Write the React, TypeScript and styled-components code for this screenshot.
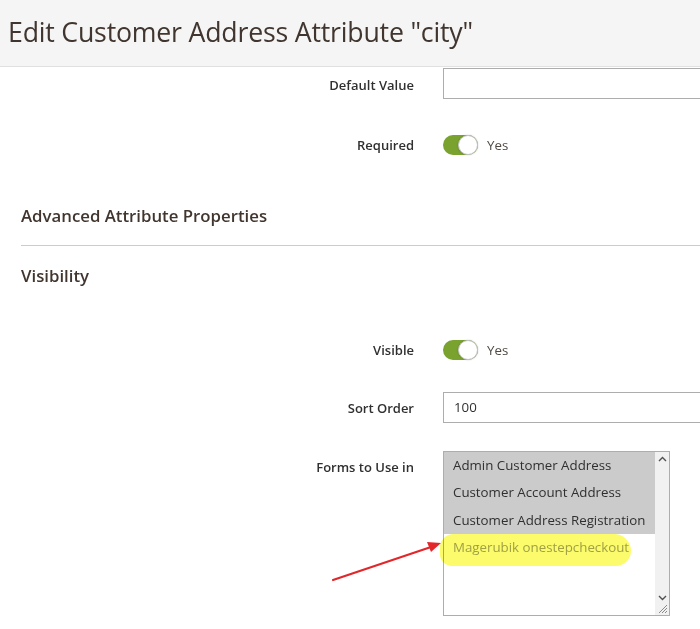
import React from 'react';
import styled, { createGlobalStyle } from 'styled-components';

const GlobalStyle = createGlobalStyle`
  html, body {
    margin: 0;
    padding: 0;
    background: #fff;
    overflow: hidden;
  }
  body {
    font-family: 'Open Sans', 'Liberation Sans', sans-serif;
    color: #303030;
  }
`;

const Page = styled.div`
  position: relative;
  width: 700px;
  height: 629px;
  overflow: hidden;
`;

const Header = styled.header`
  height: 67px;
  background: #f5f5f5;
  border-bottom: 1px solid #e1e1e1;
  display: flex;
  align-items: center;
  padding: 0 0 4px 8px;
  box-sizing: border-box;
`;

const PageTitle = styled.h1`
  margin: 0;
  font-size: 26.7px;
  font-weight: 400;
  color: #41362f;
  letter-spacing: -0.2px;
`;

const Content = styled.div`
  padding-left: 21px;
`;

const FieldRow = styled.div<{ $top: number; $align?: string }>`
  display: grid;
  grid-template-columns: 393px 1fr;
  column-gap: 29px;
  align-items: ${({ $align }) => $align || 'center'};
  margin-top: ${({ $top }) => $top}px;
`;

const Label = styled.label<{ $pad?: number }>`
  text-align: right;
  font-size: 13px;
  font-weight: 600;
  color: #303030;
  padding-top: ${({ $pad }) => $pad || 0}px;
  line-height: 19px;
`;

const TextInput = styled.div`
  width: 320px;
  height: 31px;
  box-sizing: border-box;
  border: 1px solid #adadad;
  font-size: 13.3px;
  line-height: 29px;
  padding-left: 10px;
  color: #303030;
`;

const ToggleWrap = styled.div`
  display: flex;
  align-items: center;
  gap: 9px;
  font-size: 13.3px;
  color: #514943;
`;

const Track = styled.span`
  position: relative;
  width: 35px;
  height: 20px;
  border-radius: 10px;
  background: #79a22e;
`;

const Knob = styled.span`
  position: absolute;
  right: 0;
  top: 0;
  width: 20px;
  height: 20px;
  border-radius: 50%;
  box-sizing: border-box;
  background: #fff;
  border: 1px solid #c4c4c4;
  box-shadow: 0 0 2px rgba(0, 0, 0, 0.2);
`;

const SectionTitle = styled.div<{ $top: number; $divider?: boolean }>`
  margin-top: ${({ $top }) => $top}px;
  font-size: 16.8px;
  font-weight: 600;
  color: #41362f;
  line-height: 24px;
  padding-bottom: ${({ $divider }) => ($divider ? 17 : 0)}px;
  border-bottom: ${({ $divider }) => ($divider ? '1px solid #cccccc' : 'none')};
`;

const MultiSelect = styled.div`
  position: relative;
  width: 227px;
  height: 165px;
  box-sizing: border-box;
  border: 1px solid #adadad;
  display: flex;
`;

const OptionList = styled.div`
  flex: 1;
`;

const Option = styled.div<{ $selected?: boolean; $muted?: boolean }>`
  height: 27.3px;
  line-height: 27px;
  padding-left: 9px;
  font-size: 13.3px;
  white-space: nowrap;
  background: ${({ $selected }) => ($selected ? '#cbcbcb' : 'transparent')};
  color: ${({ $muted }) => ($muted ? '#a3a3a3' : '#303030')};
`;

const ScrollBar = styled.div`
  width: 14px;
  background: #f1f1f1;
  display: flex;
  flex-direction: column;
  justify-content: space-between;
  align-items: center;
  padding: 4px 0 14px;
  box-sizing: border-box;
`;

const Grip = styled.svg`
  position: absolute;
  right: 1px;
  bottom: 1px;
`;

const Highlight = styled.span`
  position: absolute;
  left: -4px;
  top: 82px;
  width: 191px;
  height: 32px;
  border-radius: 16px 20px 18px 14px;
  background: #fbfb5c;
  mix-blend-mode: multiply;
  opacity: 0.9;
`;

const Arrow = styled.svg`
  position: absolute;
  left: 325px;
  top: 530px;
`;

const Chevron: React.FC<{ up?: boolean }> = ({ up }) => (
  <svg width="9" height="6" viewBox="0 0 9 6">
    <path
      d={up ? 'M1 5 L4.5 1.5 L8 5' : 'M1 1 L4.5 4.5 L8 1'}
      fill="none"
      stroke="#505050"
      strokeWidth="1.4"
    />
  </svg>
);

const Toggle: React.FC = () => (
  <ToggleWrap>
    <Track>
      <Knob />
    </Track>
    Yes
  </ToggleWrap>
);

export default function App() {
  return (
    <Page>
      <GlobalStyle />
      <Header>
        <PageTitle>Edit Customer Address Attribute "city"</PageTitle>
      </Header>
      <Content>
        <FieldRow $top={1}>
          <Label $pad={4}>Default Value</Label>
          <TextInput />
        </FieldRow>
        <FieldRow $top={36}>
          <Label $pad={1}>Required</Label>
          <Toggle />
        </FieldRow>
        <SectionTitle $top={49} $divider>
          Advanced Attribute Properties
        </SectionTitle>
        <SectionTitle $top={18}>Visibility</SectionTitle>
        <FieldRow $top={52}>
          <Label $pad={1}>Visible</Label>
          <Toggle />
        </FieldRow>
        <FieldRow $top={32}>
          <Label $pad={2}>Sort Order</Label>
          <TextInput>100</TextInput>
        </FieldRow>
        <FieldRow $top={28} $align="start">
          <Label $pad={7}>Forms to Use in</Label>
          <MultiSelect>
            <OptionList>
              <Option $selected>Admin Customer Address</Option>
              <Option $selected>Customer Account Address</Option>
              <Option $selected>Customer Address Registration</Option>
              <Option $muted>Magerubik onestepcheckout</Option>
            </OptionList>
            <ScrollBar>
              <Chevron up />
              <Chevron />
            </ScrollBar>
            <Grip width="11" height="11" viewBox="0 0 11 11">
              <path d="M10 2 L2 10 M10 5 L5 10 M10 8 L8 10" stroke="#8a8a8a" strokeWidth="1" />
            </Grip>
            <Highlight />
          </MultiSelect>
        </FieldRow>
      </Content>
      <Arrow width="125" height="60" viewBox="0 0 125 60">
        <line x1="8" y1="50" x2="106" y2="17" stroke="#e3262a" strokeWidth="2.2" strokeLinecap="round" />
        <path d="M116 13 L102 12 L106 22 Z" fill="#e3262a" />
      </Arrow>
    </Page>
  );
}
